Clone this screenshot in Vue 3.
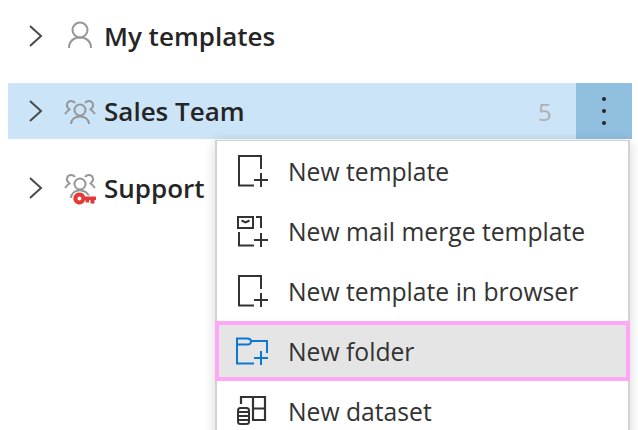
<script setup>
const rows = [
  { name: 'My templates', icon: 'user' },
  { name: 'Sales Team', icon: 'team', active: true, count: 5 },
  { name: 'Support', icon: 'shared' },
]
const items = [
  { label: 'New template', icon: 'doc' },
  { label: 'New mail merge template', icon: 'mail' },
  { label: 'New template in browser', icon: 'doc' },
  { label: 'New folder', icon: 'folder', hot: true },
  { label: 'New dataset', icon: 'data' },
]
</script>

<template>
  <div class="page">
    <div class="tree">
      <div v-for="r in rows" :key="r.name" class="row" :class="{ active: r.active }">
        <svg class="chev" width="16" height="24" viewBox="0 0 16 24" fill="none" stroke="#4a4a4a" stroke-width="2"><path d="M2 2 L13 12 L2 22" /></svg>
        <svg class="ricon" width="32" height="32" viewBox="0 0 32 32" fill="none" stroke="#979797" stroke-width="2">
          <template v-if="r.icon === 'user'">
            <circle cx="16" cy="10" r="7.500" />
            <path d="M5 28 C5 21 10 17.500 16 17.500 C22 17.500 27 21 27 28" />
          </template>
          <g v-else :transform="r.icon === 'shared' ? 'translate(0 -3)' : ''">
            <circle cx="16" cy="15" r="5.500" />
            <path d="M7 29 C7 24.500 11 21.500 16 21.500 C21 21.500 25 24.500 25 29" />
            <path d="M11 8 C10 6.500 8.500 6 7 6 C3.500 6 1.500 10 4 13 L5.500 14.500 C4 15.500 2.500 17 1 19" />
            <path d="M21 8 C22 6.500 23.500 6 25 6 C28.500 6 30.500 10 28 13 L26.500 14.500 C28 15.500 29.500 17 31 19" />
          </g>
          <path v-if="r.icon === 'shared'" stroke="#fff" stroke-width="2" fill="#e53935" fill-rule="evenodd" paint-order="stroke" d="M15.500 20.500 a6 6 0 0 1 5.600 4 H32 v3.500 h-1.500 v3.500 h-4 v-3.500 h-1.500 v2.500 h-3.500 v-2.500 h-0.400 A6 6 0 1 1 15.500 20.500 Z M15.500 24.500 a2 2 0 1 0 0 4 a2 2 0 0 0 0 -4 Z" />
        </svg>
        <span class="name">{{ r.name }}</span>
        <template v-if="r.active">
          <span class="count">{{ r.count }}</span>
          <span class="more"><i></i><i></i><i></i></span>
        </template>
      </div>
    </div>

    <div class="menu">
      <div v-for="m in items" :key="m.label" class="item" :class="{ hot: m.hot }">
        <svg class="micon" width="34" height="34" viewBox="0 0 34 34" fill="none" :stroke="m.icon === 'folder' ? '#0a78d4' : '#333'" stroke-width="2">
          <template v-if="m.icon === 'doc'">
            <path d="M25 15 V2 H3 V31.500 H18" />
            <path d="M18 26 H32 M25 19 V33" />
          </template>
          <template v-else-if="m.icon === 'mail'">
            <rect x="2" y="3" width="15" height="11" />
            <path d="M5.500 6.500 L9.500 8.500 L13.500 6.500" />
            <path d="M20 3 H25 V14 M3 18 V31.500 H18" />
            <path d="M18 26 H32 M25 19 V33" />
          </template>
          <template v-else-if="m.icon === 'folder'">
            <path d="M18 29.500 H1 V4.500 H11 Q15 4.500 15 7.500 Q15 10.500 11 10.500 H1 M15 7 H31 V19" />
            <path d="M18 24 H32 M25 17 V31" />
          </template>
          <template v-else>
            <path d="M5 10 V3 H29 V26 H16 M17 3 V26 M17 14.500 H29" stroke-width="2.200" />
            <rect x="2" y="14" width="11" height="16" rx="2.500" />
            <path d="M2 18 H13 M2 22 H13 M2 26 H13" />
          </template>
        </svg>
        <span class="label">{{ m.label }}</span>
      </div>
    </div>
  </div>
</template>

<style scoped>
.page {
  position: relative;
  width: 638px;
  height: 430px;
  overflow: hidden;
  background: #fff;
  font-family: "Open Sans", "Noto Sans", sans-serif;
  color: #252525;
}
.tree {
  display: flex;
  flex-direction: column;
  gap: 19px;
  padding: 8px 6px 0 8px;
}
.row {
  height: 56px;
  display: flex;
  align-items: center;
  padding-left: 20px;
}
.row:last-child {
  margin-top: 2px;
}
.active {
  background: #cce4f7;
}
.chev {
  flex: none;
}
.ricon {
  flex: none;
  margin-left: 20px;
  overflow: visible;
}
.name {
  margin-left: 8px;
  font-size: 26px;
  font-weight: 600;
}
.count {
  margin-left: auto;
  width: 38px;
  font-size: 24px;
  color: #b0b0b0;
}
.more {
  width: 56px;
  height: 56px;
  background: #90bfe0;
  display: flex;
  flex-direction: column;
  align-items: center;
  justify-content: center;
  gap: 8px;
}
.more i {
  width: 4px;
  height: 4px;
  border-radius: 50%;
  background: #252525;
}
.menu {
  position: absolute;
  left: 215px;
  top: 140px;
  width: 415px;
  height: 320px;
  box-sizing: border-box;
  background: #fff;
  border: solid #d2d2d2;
  border-width: 1px 2px 0;
  box-shadow: 0 2px 12px rgba(0, 0, 0, 0.16);
}
.item {
  height: 60px;
  display: flex;
  align-items: center;
  padding-left: 19px;
  box-sizing: border-box;
}
.hot {
  margin: 0 -2px;
  padding-left: 17px;
  background: #e5e5e5;
  border: 4px solid #ffa6f6;
}
.micon {
  flex: none;
}
.label {
  margin-left: 18px;
  font-size: 24.7px;
  color: #333;
}
</style>
